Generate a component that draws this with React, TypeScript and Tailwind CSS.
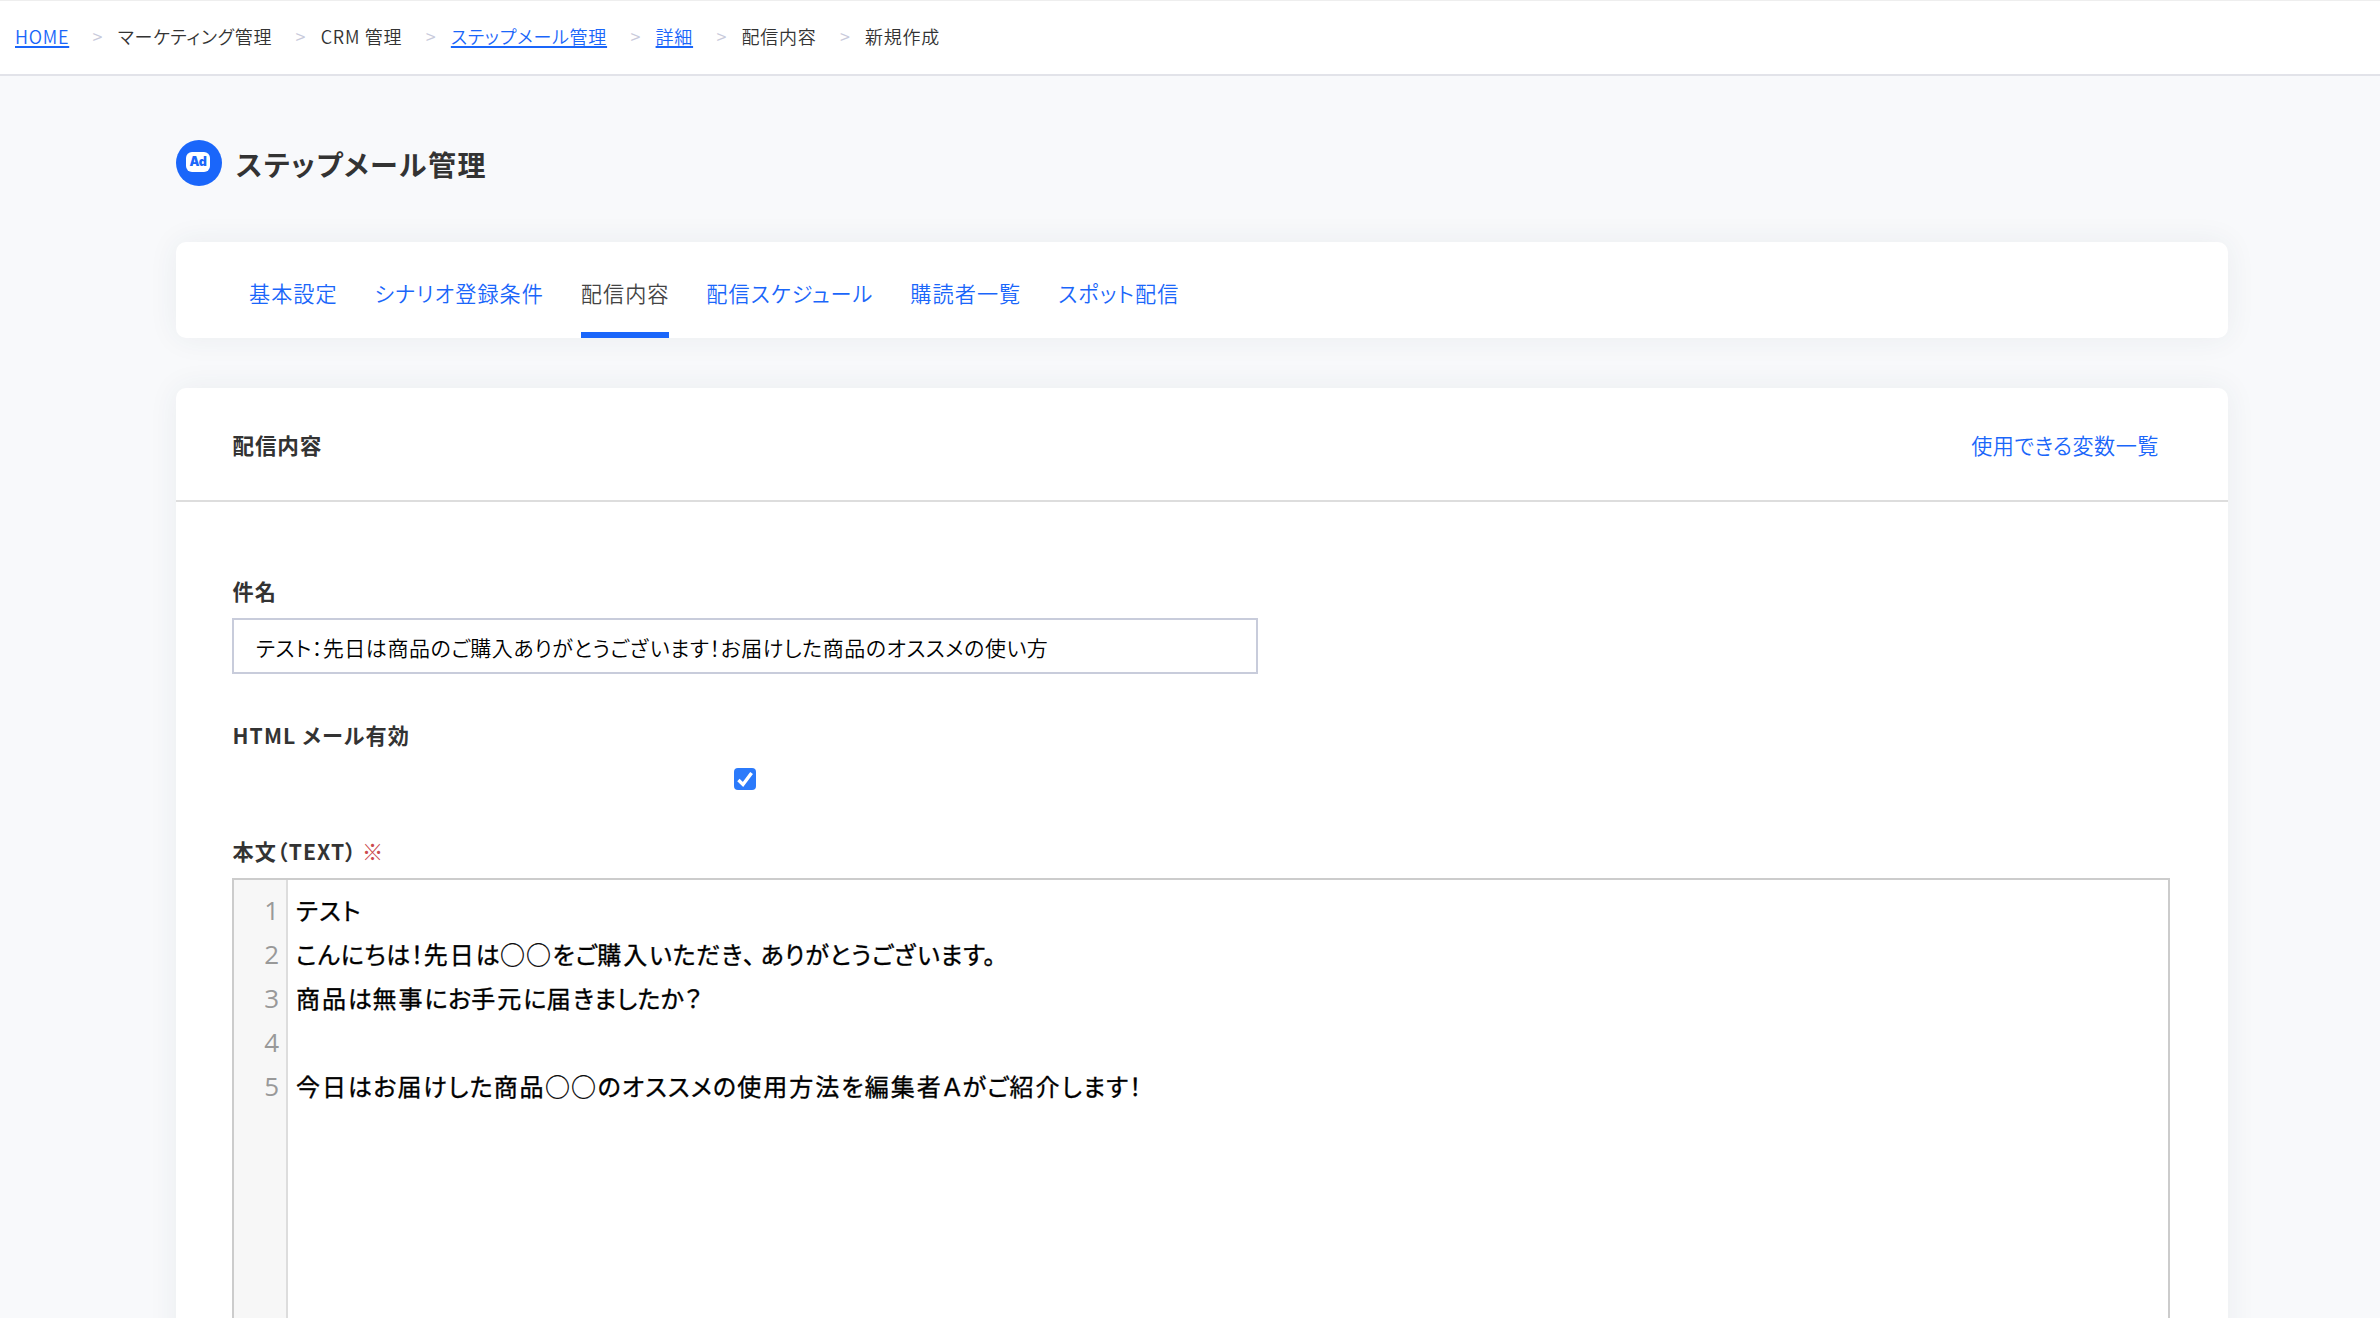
import { Fragment, ReactNode } from "react";

type Crumb = { label: string; link?: boolean };

const crumbs: Crumb[] = [
  { label: "HOME", link: true },
  { label: "マーケティング管理" },
  { label: "CRM 管理" },
  { label: "ステップメール管理", link: true },
  { label: "詳細", link: true },
  { label: "配信内容" },
  { label: "新規作成" },
];

const tabs = [
  { label: "基本設定", tracking: "tracking-[1px]" },
  { label: "シナリオ登録条件", tracking: "tracking-[1.05px]" },
  { label: "配信内容", tracking: "tracking-[1px]", active: true },
  { label: "配信スケジュール", tracking: "tracking-[1.05px]" },
  { label: "購読者一覧", tracking: "tracking-[1.05px]" },
  { label: "スポット配信", tracking: "tracking-[1.15px]" },
];

const lines = [
  { text: "テスト", tracking: "tracking-[1.4px]" },
  { text: "こんにちは！先日は◯◯をご購入いただき、ありがとうございます。", tracking: "tracking-[0.72px]" },
  { text: "商品は無事にお手元に届きましたか？", tracking: "tracking-[0.4px]" },
  { text: "", tracking: "" },
  { text: "今日はお届けした商品◯◯のオススメの使用方法を編集者Ａがご紹介します！", tracking: "tracking-[1.2px]" },
];

// Ideographs and circles sit on a wider pitch than kana.
function CodeText({ text }: { text: string }) {
  return (
    <>
      {text.split(/([\u4e00-\u9fff◯]+|、)/).map((part, i) =>
        i % 2 === 0 ? (
          <Fragment key={i}>{part}</Fragment>
        ) : (
          <span key={i} className={part === "、" ? "tracking-[5.5px]" : "tracking-[2px]"}>
            {part}
          </span>
        ),
      )}
    </>
  );
}

function Label({ children, className }: { children: ReactNode; className: string }) {
  return (
    <div className={`flex h-8 items-center pl-[0.5px] text-[21.15px] leading-8 font-bold tracking-[1.1px] whitespace-nowrap ${className}`}>
      {children}
    </div>
  );
}

export default function App() {
  return (
    <div className="h-[1318px] w-[2380px] overflow-hidden bg-[#f8f9fb] font-['Noto_Sans_CJK_JP',sans-serif] text-[#333] [font-feature-settings:'palt']">
      <nav className="flex h-[76px] items-center border-t border-b-2 border-t-[#eeeeee] border-b-[#e2e3e9] bg-white pb-[3px] pl-[15px] text-[18px] leading-7 font-[350] tracking-[0.74px] whitespace-nowrap">
        {crumbs.map((c, i) => (
          <Fragment key={c.label}>
            {i > 0 && <span className="mr-[14.5px] ml-[23.4px] text-[#c8cadb]">&gt;</span>}
            {c.link ? (
              <a className="text-[#1a66fa] underline decoration-2 underline-offset-2">{c.label}</a>
            ) : (
              <span>{c.label}</span>
            )}
          </Fragment>
        ))}
      </nav>

      <main className="pr-[152px] pl-44">
        <header className="mt-16 flex h-[46px] items-center">
          <div className="flex size-[46px] items-start justify-center rounded-full bg-[#1a66fa] pt-3">
            <span className="mr-0.5 flex h-5 w-6 items-center justify-center rounded-[6px] bg-white font-['Inter',sans-serif] text-[12.5px] leading-5 font-black tracking-[-0.2px] text-[#1a66fa]">
              Ad
            </span>
          </div>
          <h1 className="ml-[14px] pt-[2px] text-[28px] leading-[46px] font-bold tracking-[1.55px] whitespace-nowrap">
            ステップメール管理
          </h1>
        </header>

        <div className="mt-14 flex h-24 gap-[36.9px] rounded-[10px] bg-white pl-[73px] text-[21.15px] leading-8 font-[350] whitespace-nowrap shadow-[0_0_30px_rgba(40,70,90,0.07)]">
          {tabs.map((t) => (
            <a
              key={t.label}
              className={`flex h-24 flex-col pt-[35px] ${t.tracking} ${
                t.active ? "border-b-[6px] border-[#1a66fa] text-[#444]" : "text-[#1a66fa]"
              }`}
            >
              {t.label}
            </a>
          ))}
        </div>

        <section className="mt-[50px] h-[1000px] rounded-[10px] bg-white shadow-[0_0_30px_rgba(40,70,90,0.07)]">
          <div className="flex h-[114px] items-center justify-between border-b-2 border-[#dddddd] pt-[2px] pr-[69px] pl-[56.5px]">
            <h2 className="text-[21.6px] leading-8 font-bold tracking-[0.8px]">配信内容</h2>
            <a className="text-[21.15px] leading-8 font-[350] tracking-[0.5px] text-[#1a66fa]">使用できる変数一覧</a>
          </div>

          <div className="px-14 pt-[73px]">
            <Label className="">件名</Label>
            <div className="mt-[11px] flex h-14 w-[1026px] items-center border-2 border-[#c8ccdb] bg-white pt-0.5 pl-[22px] text-[21px] leading-8 font-[350] tracking-[0.54px] whitespace-nowrap text-black">
              テスト：先日は商品のご購入ありがとうございます！お届けした商品のオススメの使い方
            </div>

            <Label className="mt-[45px]">HTML メール有効</Label>
            <div className="mt-[17px] flex h-[22px] w-[1026px] justify-center">
              <svg viewBox="0 0 22 22" className="size-[22px] rounded-[4px] bg-[#2b7afb]">
                <path d="M4.4 12 9 16.4 17.6 5" fill="none" stroke="#fff" strokeWidth="3.4" />
              </svg>
            </div>

            <Label className="mt-[45px]">
              本文（TEXT）
              <span className="ml-[5px] font-[350] text-[#cb4a4e]">※</span>
            </Label>
            <div className="mt-[11px] flex h-[600px] w-[1938px] border-2 border-[#cccccc] bg-white text-2xl leading-[44px] text-black">
              <div className="flex w-[54px] flex-col border-r-2 border-[#dddddd] bg-[#f7f7f7] pt-2 pr-[7px] text-right font-['Open_Sans',sans-serif] text-[26px] leading-[44px] text-[#999]">
                {lines.map((_, i) => (
                  <div key={i} className="h-11">
                    {i + 1}
                  </div>
                ))}
              </div>
              <div className="pt-2 pl-2 font-normal whitespace-nowrap [-webkit-text-stroke:0.35px_#000]">
                {lines.map((l, i) => (
                  <div key={i} className={`h-11 ${l.tracking}`}>
                    <CodeText text={l.text} />
                  </div>
                ))}
              </div>
            </div>
          </div>
        </section>
      </main>
    </div>
  );
}
